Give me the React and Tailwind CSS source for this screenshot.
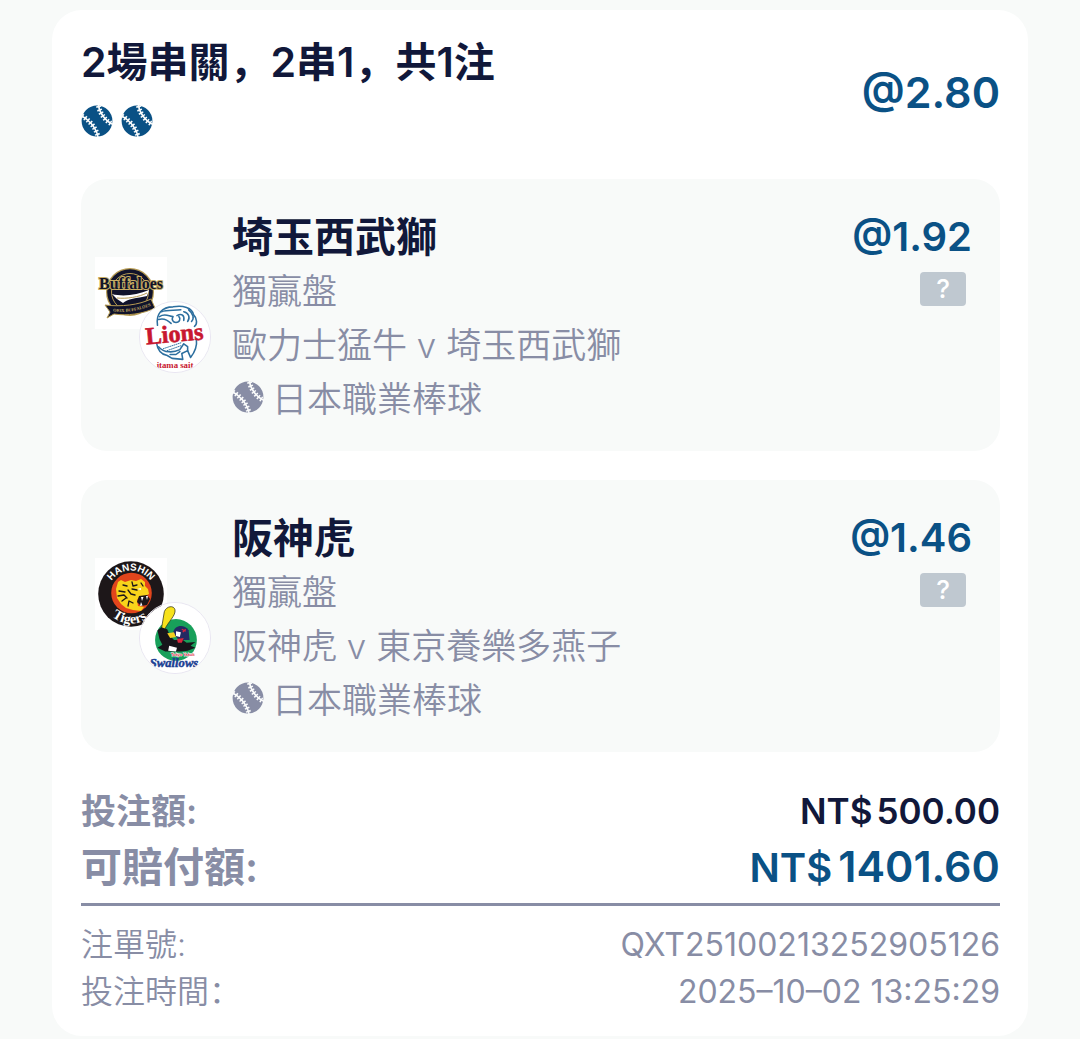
import React from 'react';

const legs = [
  {
    id: 1,
    pick: '埼玉西武獅',
    market: '獨贏盤',
    match: '歐力士猛牛 v 埼玉西武獅',
    league: '日本職業棒球',
    odds: '@1.92',
    home: BuffaloesLogo,
    away: LionsLogo,
  },
  {
    id: 2,
    pick: '阪神虎',
    market: '獨贏盤',
    match: '阪神虎 v 東京養樂多燕子',
    league: '日本職業棒球',
    odds: '@1.46',
    home: TigersLogo,
    away: SwallowsLogo,
  },
];

function Baseball({ className = '' }) {
  return (
    <svg viewBox="0 0 32 32" className={`size-8 shrink-0 ${className}`} aria-hidden="true">
      <circle cx="16" cy="16" r="15.4" fill="currentColor" />
      <g fill="none" stroke="#fafbfb">
        <path d="M17.5 0C18 7 24 16 32 19.5" strokeWidth="1.6" />
        <path d="M17.5 0C18 7 24 16 32 19.5" strokeWidth="5" strokeDasharray="1.5 1.9" strokeDashoffset="-1" />
        <path d="M0 10.5C7 14 15 22 17 32" strokeWidth="1.6" />
        <path d="M0 10.5C7 14 15 22 17 32" strokeWidth="5" strokeDasharray="1.5 1.9" strokeDashoffset="-1" />
      </g>
    </svg>
  );
}

function BuffaloesLogo() {
  return (
    <svg viewBox="0 0 72 72" className="block size-full">
      <rect width="72" height="72" fill="#fff" />
      <circle cx="35" cy="35" r="24" fill="#b59a52" />
      <circle cx="35" cy="35" r="22.8" fill="#10132b" />
      <circle cx="35" cy="35" r="18.5" fill="none" stroke="#b59a52" strokeWidth="1" />
      <path d="M17 37C28 40 42 38 54 33L52 39C42 41 32 42 28 46L22 42Z" fill="#fff" />
      <path d="M22 41C32 42 44 40 52 36" fill="none" stroke="#b59a52" strokeWidth="1" />
      <path d="M10 48C26 50 44 48 56 42L60 51C48 57 32 59 19 57L12 61L15 55Z" fill="#10132b" stroke="#b59a52" strokeWidth="1" />
      <path id="buf-ribbon" d="M18 54.5C33 56 47 53 58 48" fill="none" />
      <text fill="#c8ad62" fontSize="4.4" fontWeight="700" className="font-['Liberation_Serif',serif]">
        <textPath href="#buf-ribbon">ORIX BUFFALOES</textPath>
      </text>
      <text
        x="36" y="32" textAnchor="middle" fontSize="16" fontWeight="700"
        fill="#10132b" stroke="#c8ad62" strokeWidth="2" paintOrder="stroke"
        className="font-['Liberation_Serif',serif]"
      >
        Buffaloes
      </text>
    </svg>
  );
}

function LionsLogo() {
  return (
    <svg viewBox="0 0 72 72" className="block size-full">
      <rect width="72" height="72" fill="#fff" />
      <g fill="none" stroke="#2d6f9f" strokeWidth="1.6" strokeLinecap="round" strokeLinejoin="round">
        <path d="M18 24C16 12 23 5 34 5C44 3 54 6 55 13C59 17 59 23 56 25" />
        <path d="M20 15C26 11 30 15 34 15C32 18 34 21 37 21C41 21 42 17 40 15M38 14C43 11 46 14 45 19M45 10C50 11 52 16 49 20M50 8C55 12 56 17 53 20" />
        <path d="M19 18C25 16 29 19 32 22M22 10C28 8 36 9 42 8" />
        <path d="M17 42C18 49 22 54 28 55L33 58L44 59L43 53L49 50L52 57C57 51 59 46 58 38" />
        <path d="M19 46C25 53 35 52 41 49L45 43L49 46L49 50M31 54L37 54L41 51" />
        <path d="M24 48L42 42M28 50L42 45" strokeWidth="1" strokeDasharray="1 1.3" />
      </g>
      <g className="font-['Liberation_Serif',serif]" fill="#c8172f" fontWeight="700" textAnchor="middle">
        <text
          x="36" y="41" fontSize="25" transform="rotate(-5 36 40)"
          stroke="#c8172f" strokeWidth=".6"
        >
          Lions
        </text>
        <text x="36" y="68" fontSize="9">itama sait</text>
      </g>
    </svg>
  );
}

function TigersLogo() {
  return (
    <svg viewBox="0 0 72 72" className="block size-full">
      <rect width="72" height="72" fill="#fff" />
      <circle cx="36" cy="36" r="32.8" fill="#1d1719" />
      <circle cx="36.5" cy="35" r="20.3" fill="#e2451c" />
      {/* tiger head */}
      <path
        d="M23 24L26 22L30 24L36 22L41 23L46 21L50 24L50 28L53 31L54 36L50 38L45 38L42 42L43 48L49 49L46 53L38 52L31 50L26 46L22 40L21 31Z"
        fill="#f8d41b"
      />
      <path
        d="M28 27L32 28M37 24L38 28L42 27M24 33L30 34M23 38L29 37L32 40M27 43L31 40M33 48L34 43L38 45M37 31L42 32M46 25L48 28M33 32L36 36L40 37"
        fill="none" stroke="#1d1719" strokeWidth="1.3" strokeLinecap="round" strokeLinejoin="round"
      />
      <path d="M44 38L52 37L55 41L52 47L46 48L42 44Z" fill="#1d1719" />
      <path d="M46 39L47 43L48.5 39ZM51 38L52 42L53 38ZM45 48L46 44L47.5 47.5Z" fill="#fff" />
      <path d="M42 31L46 30L46 32Z" fill="#fff" />
      <path id="tig-top" d="M12.5 36A23.5 23.5 0 0 1 59.5 36" fill="none" />
      <path id="tig-bottom" d="M6.5 36A29.5 29.5 0 0 0 65.5 36" fill="none" />
      <g fill="#fff" fontWeight="700" textAnchor="middle">
        <text fontSize="10" className="font-['Liberation_Sans',sans-serif]">
          <textPath href="#tig-top" startOffset="50%">HANSHIN</textPath>
        </text>
        <text fontSize="14" className="font-['Liberation_Serif',serif]">
          <textPath href="#tig-bottom" startOffset="48%">Tigers</textPath>
        </text>
      </g>
    </svg>
  );
}

function SwallowsLogo() {
  return (
    <svg viewBox="0 0 72 72" className="block size-full">
      <rect width="72" height="72" fill="#fff" />
      <circle cx="37" cy="38" r="21.5" fill="#18a05a" />
      <path d="M22 27L25 9C27 3 35 2 36 7C37 13 29 19 25 28Z" fill="#f7e21c" stroke="#3b3a20" strokeWidth=".8" />
      {/* bird */}
      <path d="M34 31C35 23 45 21 50 28L51 38L40 38Z" fill="#232a63" />
      <path d="M18 28L22 25L28 27L31 34L35 38L44 38L48 41L57 40L52 44L57 46L49 49L42 50L26 50L18 46L23 43L20 37Z" fill="#17151b" />
      <path d="M28 31L35 30L37 35L31 36Z" fill="#f4cf1d" />
      <path d="M37 29L42 30L41 35L37 34Z" fill="#fff" />
      <path d="M38 37L45 36L43 41L39 41Z" fill="#d7263d" />
      <path d="M30 44L38 46L37 50L29 49Z" fill="#fff" />
      <path d="M43 27L47 29M44 30L47 27" stroke="#d7263d" strokeWidth="1.3" />
      <text
        x="44" y="55" textAnchor="middle" fontSize="4" fontWeight="700" fill="#d7263d"
        stroke="#fff" strokeWidth=".8" paintOrder="stroke"
        className="font-['Liberation_Sans',sans-serif]"
      >
        Tokyo Yakult
      </text>
      <text
        x="35" y="66" textAnchor="middle" fontSize="13" fontWeight="700" fontStyle="italic"
        fill="#1b3f93" stroke="#1b3f93" strokeWidth=".5" className="font-['Liberation_Serif',serif]"
      >
        Swallows
      </text>
    </svg>
  );
}

function Leg({ leg }) {
  const Home = leg.home;
  const Away = leg.away;

  return (
    <article className="flex rounded-[26px] bg-[#f8faf9] pt-[31px] pr-7 pb-[25px] pl-3.5">
      {/* Overlapping team crests */}
      <div className="relative mt-[47px] mr-[21px] size-[116px] shrink-0">
        <div className="size-[72px]">
          <Home />
        </div>
        <div className="absolute right-0 bottom-0 size-[72px] overflow-hidden rounded-full border border-[#e9e6f2]">
          <Away />
        </div>
      </div>

      <div className="min-w-0 flex-1 text-[35px] leading-[54px] font-[350] text-[#888da5]">
        <h2 className="text-[41px] leading-[54px] font-semibold text-[#11183a]">{leg.pick}</h2>
        <p>{leg.market}</p>
        <p>{leg.match}</p>
        <p className="flex items-center gap-2">
          <Baseball className="mb-1" />
          {leg.league}
        </p>
      </div>

      <div className="flex flex-col items-end">
        <span className="text-[40px] leading-[54px] font-semibold text-[#0a5185]">{leg.odds}</span>
        <button
          type="button"
          aria-label="說明"
          className="mt-2 mr-1.5 h-[34px] w-[46px] rounded-[4px] bg-[#bfc8d0] text-[26px] leading-[34px] font-medium text-white"
        >
          ?
        </button>
      </div>
    </article>
  );
}

export default function App() {
  return (
    <main
      lang="zh-Hant"
      className="min-h-screen bg-[#f8faf9] px-[52px] pt-2.5 pb-[3px] font-['Inter','Noto_Sans_CJK_TC',sans-serif]"
    >
      <section className="rounded-[30px] bg-white pt-[27px] pr-7 pb-[21px] pl-[29px]">
        <header className="flex items-center justify-between">
          <div className="pb-2.5">
            <h1
              lang="zh-Hans"
              className="font-['Inter','Noto_Sans_CJK_SC',sans-serif] text-[41px] leading-[50px] font-semibold text-[#11183a]"
            >
              2場串關，2串1，共1注
            </h1>
            <div className="mt-[18px] flex gap-2 text-[#0a5185]">
              <Baseball />
              <Baseball />
            </div>
          </div>
          <span className="text-[43px] leading-[54px] font-semibold text-[#0a5185]">@2.80</span>
        </header>

        <div className="mt-8 flex flex-col gap-[29px]">
          {legs.map((leg) => (
            <Leg key={leg.id} leg={leg} />
          ))}
        </div>

        <dl className="mt-8 font-semibold text-[#888da5]">
          <div className="flex items-center justify-between text-[35px] leading-[54px]">
            <dt>投注額:</dt>
            <dd className="flex gap-1 text-[#11183a]">
              <span>NT$</span>
              <span>500.00</span>
            </dd>
          </div>
          <div className="flex items-center justify-between text-[41px] leading-[56px]">
            <dt>可賠付額:</dt>
            <dd className="flex items-baseline gap-1.5 text-[#0a5185]">
              <span className="text-[40px] leading-[56px]">NT$</span>
              <span className="text-[43px] leading-[56px]">1401.60</span>
            </dd>
          </div>
        </dl>

        <dl className="mt-[7px] border-t-3 border-[#888da5] pt-[15px] text-[32px] leading-[47px] font-[350] text-[#888da5]">
          <div className="flex items-center justify-between">
            <dt>注單號:</dt>
            <dd className="font-normal">QXT25100213252905126</dd>
          </div>
          <div className="flex items-center justify-between">
            <dt lang="zh-Hans" className="font-['Inter','Noto_Sans_CJK_SC',sans-serif]">投注時間：</dt>
            <dd className="font-normal">2025–10–02 13:25:29</dd>
          </div>
        </dl>
      </section>
    </main>
  );
}
